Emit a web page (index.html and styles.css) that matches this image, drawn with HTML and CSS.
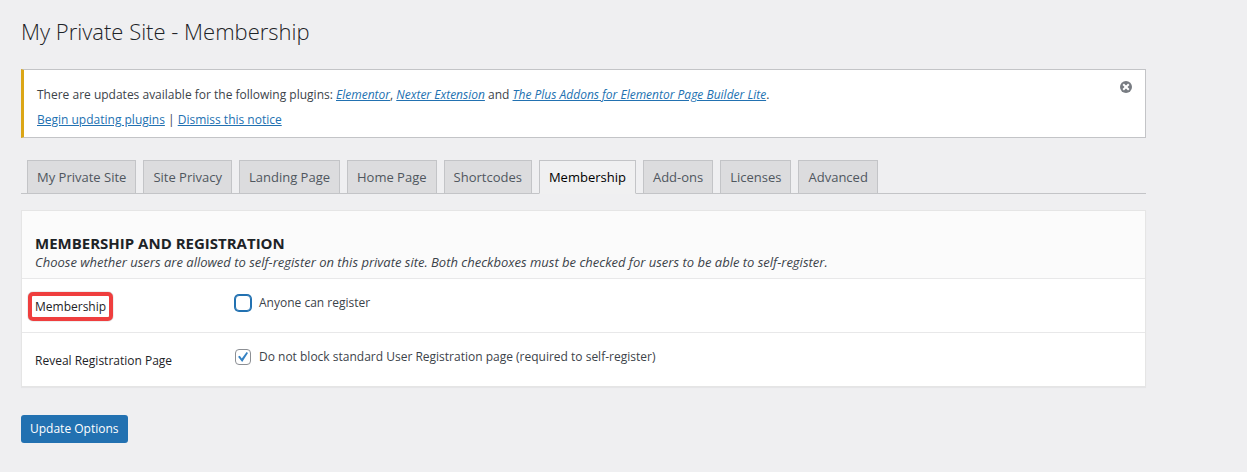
FILE: index.html
```html
<!DOCTYPE html>
<html lang="en">
<head>
  <meta charset="UTF-8">
  <meta name="viewport" content="width=device-width, initial-scale=1.0">
  <title>My Private Site - Membership</title>
  <link rel="stylesheet" href="styles.css">
</head>
<body>
  <main class="wrap">
    <h1>My Private Site - Membership</h1>

    <div class="notice">
      <div class="notice-text">
        <p>There are updates available for the following plugins: <a href="#"><em>Elementor</em></a>, <a href="#"><em>Nexter Extension</em></a> and <a href="#"><em>The Plus Addons for Elementor Page Builder Lite</em></a>.</p>
        <p><a href="#">Begin updating plugins</a> | <a href="#">Dismiss this notice</a></p>
      </div>
      <button type="button" class="notice-dismiss" aria-label="Dismiss this notice">
        <svg width="12" height="12" viewBox="0 0 12 12">
          <circle cx="6" cy="6" r="6" fill="#787c82"/>
          <path d="M3.2 3.2l5.6 5.6M8.8 3.2L3.2 8.8" stroke="#fff" stroke-width="2"/>
        </svg>
      </button>
    </div>

    <nav class="nav-tabs">
      <a href="#" class="nav-tab">My Private Site</a>
      <a href="#" class="nav-tab">Site Privacy</a>
      <a href="#" class="nav-tab">Landing Page</a>
      <a href="#" class="nav-tab">Home Page</a>
      <a href="#" class="nav-tab">Shortcodes</a>
      <a href="#" class="nav-tab nav-tab-active">Membership</a>
      <a href="#" class="nav-tab">Add-ons</a>
      <a href="#" class="nav-tab">Licenses</a>
      <a href="#" class="nav-tab">Advanced</a>
    </nav>

    <form>
      <section class="panel">
        <header class="panel-header">
          <h2>MEMBERSHIP AND REGISTRATION</h2>
          <p>Choose whether users are allowed to self-register on this private site. Both checkboxes must be checked for users to be able to self-register.</p>
        </header>
        <div class="row">
          <div class="row-title"><span class="highlight">Membership</span></div>
          <div class="row-field">
            <input type="checkbox" id="membership" class="focused">
            <label for="membership">Anyone can register</label>
          </div>
        </div>
        <div class="row">
          <div class="row-title">Reveal Registration Page</div>
          <div class="row-field">
            <input type="checkbox" id="reveal" checked>
            <label for="reveal">Do not block standard User Registration page (required to self-register)</label>
          </div>
        </div>
      </section>
      <button type="button" class="button-primary">Update Options</button>
    </form>
  </main>
</body>
</html>
```
FILE: styles.css
```css
* {
  box-sizing: border-box;
}

body {
  margin: 0;
  background: #efeff1;
  color: #3c434a;
  font-family: "Open Sans", "Noto Sans", sans-serif;
  font-size: 12px;
  line-height: 18px;
}

h1, h2, p {
  margin: 0;
}

a {
  color: #2271b1;
}

.wrap {
  margin: 0 101px 0 21px;
  padding-top: 16px;
}

h1 {
  color: #1d2327;
  font-size: 22px;
  font-weight: 300;
  line-height: 30px;
}

.notice {
  display: flex;
  justify-content: space-between;
  align-items: flex-start;
  margin-top: 23px;
  padding: 9px 13px 8px;
  background: #fff;
  border: 1px solid #c3c4c7;
  border-left: 3px solid #dba617;
  font-weight: 500;
}

.notice-text {
  display: flex;
  flex-direction: column;
  gap: 7px;
  padding-top: 7px;
}

.notice-dismiss {
  display: flex;
  margin: 2px 0;
  padding: 0;
  border: none;
  background: none;
  cursor: pointer;
}

.nav-tabs {
  display: flex;
  gap: 7px;
  margin-top: 22px;
  padding-left: 6px;
  border-bottom: 1px solid #c3c4c7;
}

.nav-tab {
  margin-bottom: -1px;
  padding: 7px 9px;
  background: #dcdcde;
  border: 1px solid #c3c4c7;
  color: #50575e;
  font-size: 13px;
  font-weight: 500;
  text-decoration: none;
}

.nav-tab-active {
  background: #f0f0f1;
  border-bottom-color: #f0f0f1;
  color: #000;
}

.panel {
  margin-top: 16px;
  background: #fff;
  border: 1px solid #e5e5e5;
  box-shadow: 0 1px 1px rgba(0, 0, 0, 0.04);
}

.panel-header {
  padding: 22px 13px 7px;
  background: #fbfbfb;
}

.panel-header h2 {
  color: #1d2327;
  font-size: 15px;
  font-weight: 700;
  line-height: 20px;
}

.panel-header p {
  font-size: 13px;
  font-style: italic;
}

.row {
  display: grid;
  grid-template-columns: 200px 1fr;
  padding: 0 13px;
  border-top: 1px solid #e8e8e9;
}

.row-title {
  padding: 19px 0 16px;
  color: #1d2327;
}

.row-field {
  display: flex;
  align-items: center;
  gap: 8px;
  padding: 15px 0 20px;
}

.highlight {
  margin-left: -7px;
  padding: 2px 3px;
  border: 4px solid #ef3e3e;
  border-radius: 5px;
  box-shadow: 0 0 1px 0 #555;
}

input[type="checkbox"] {
  appearance: none;
  width: 16px;
  height: 16px;
  margin: 0;
  background: #fff;
  border: 1px solid #8c8f94;
  border-radius: 4px;
}

input[type="checkbox"].focused {
  border-color: #2271b1;
  box-shadow: 0 0 0 1px #2271b1;
}

input[type="checkbox"]:checked::before {
  content: "";
  display: block;
  width: 10px;
  height: 10px;
  margin: 2px;
  background: #3582c4;
  clip-path: polygon(0 48%, 18% 38%, 38% 66%, 86% 0, 100% 10%, 42% 100%);
}

.button-primary {
  margin-top: 28px;
  padding: 5px 9px;
  background: #2271b1;
  border: none;
  border-radius: 3px;
  color: #fff;
  font: inherit;
  font-weight: 500;
  cursor: pointer;
}
```
